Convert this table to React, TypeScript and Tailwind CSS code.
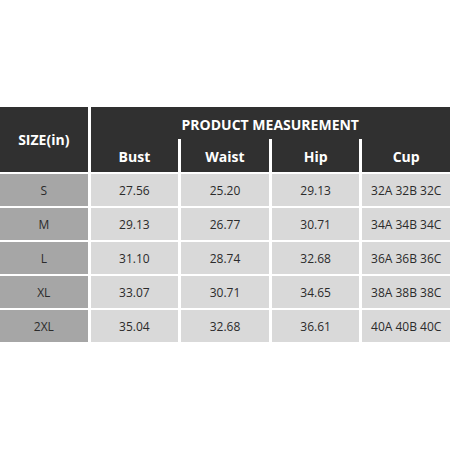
const rows = [
  { size: "S", bust: "27.56", waist: "25.20", hip: "29.13", cup: "32A 32B 32C" },
  { size: "M", bust: "29.13", waist: "26.77", hip: "30.71", cup: "34A 34B 34C" },
  { size: "L", bust: "31.10", waist: "28.74", hip: "32.68", cup: "36A 36B 36C" },
  { size: "XL", bust: "33.07", waist: "30.71", hip: "34.65", cup: "38A 38B 38C" },
  { size: "2XL", bust: "35.04", waist: "32.68", hip: "36.61", cup: "40A 40B 40C" },
];

export default function App() {
  return (
    <div
      className="w-[450px] h-[450px] bg-white pt-[107px]"
      style={{ fontFamily: '"Open Sans", "Noto Sans", sans-serif' }}
    >
      {/* Header */}
      <div className="grid grid-cols-5 grid-rows-[32px_33px] gap-x-[3px] text-white font-bold text-[14px]">
        <div className="row-span-2 bg-[#303030] flex items-center justify-center">
          SIZE(in)
        </div>
        <div className="col-span-4 bg-[#303030] flex items-center justify-center pt-[2px]">
          PRODUCT MEASUREMENT
        </div>
        {["Bust", "Waist", "Hip", "Cup"].map((h) => (
          <div key={h} className="bg-[#303030] flex items-center justify-center pt-[2px]">
            {h}
          </div>
        ))}
      </div>

      {/* Body */}
      <div className="mt-[2px] flex flex-col gap-y-[2px] text-[12px] text-[#2b2b2b]">
        {rows.map((r) => (
          <div key={r.size} className="grid grid-cols-5 gap-x-[3px] h-[32px]">
            <div className="bg-[#a6a6a6] flex items-center justify-center pt-[1px]">{r.size}</div>
            <div className="bg-[#d9d9d9] flex items-center justify-center pt-[1px]">{r.bust}</div>
            <div className="bg-[#d9d9d9] flex items-center justify-center pt-[1px]">{r.waist}</div>
            <div className="bg-[#d9d9d9] flex items-center justify-center pt-[1px]">{r.hip}</div>
            <div className="bg-[#d9d9d9] flex items-center justify-center pt-[1px]">{r.cup}</div>
          </div>
        ))}
      </div>
    </div>
  );
}
